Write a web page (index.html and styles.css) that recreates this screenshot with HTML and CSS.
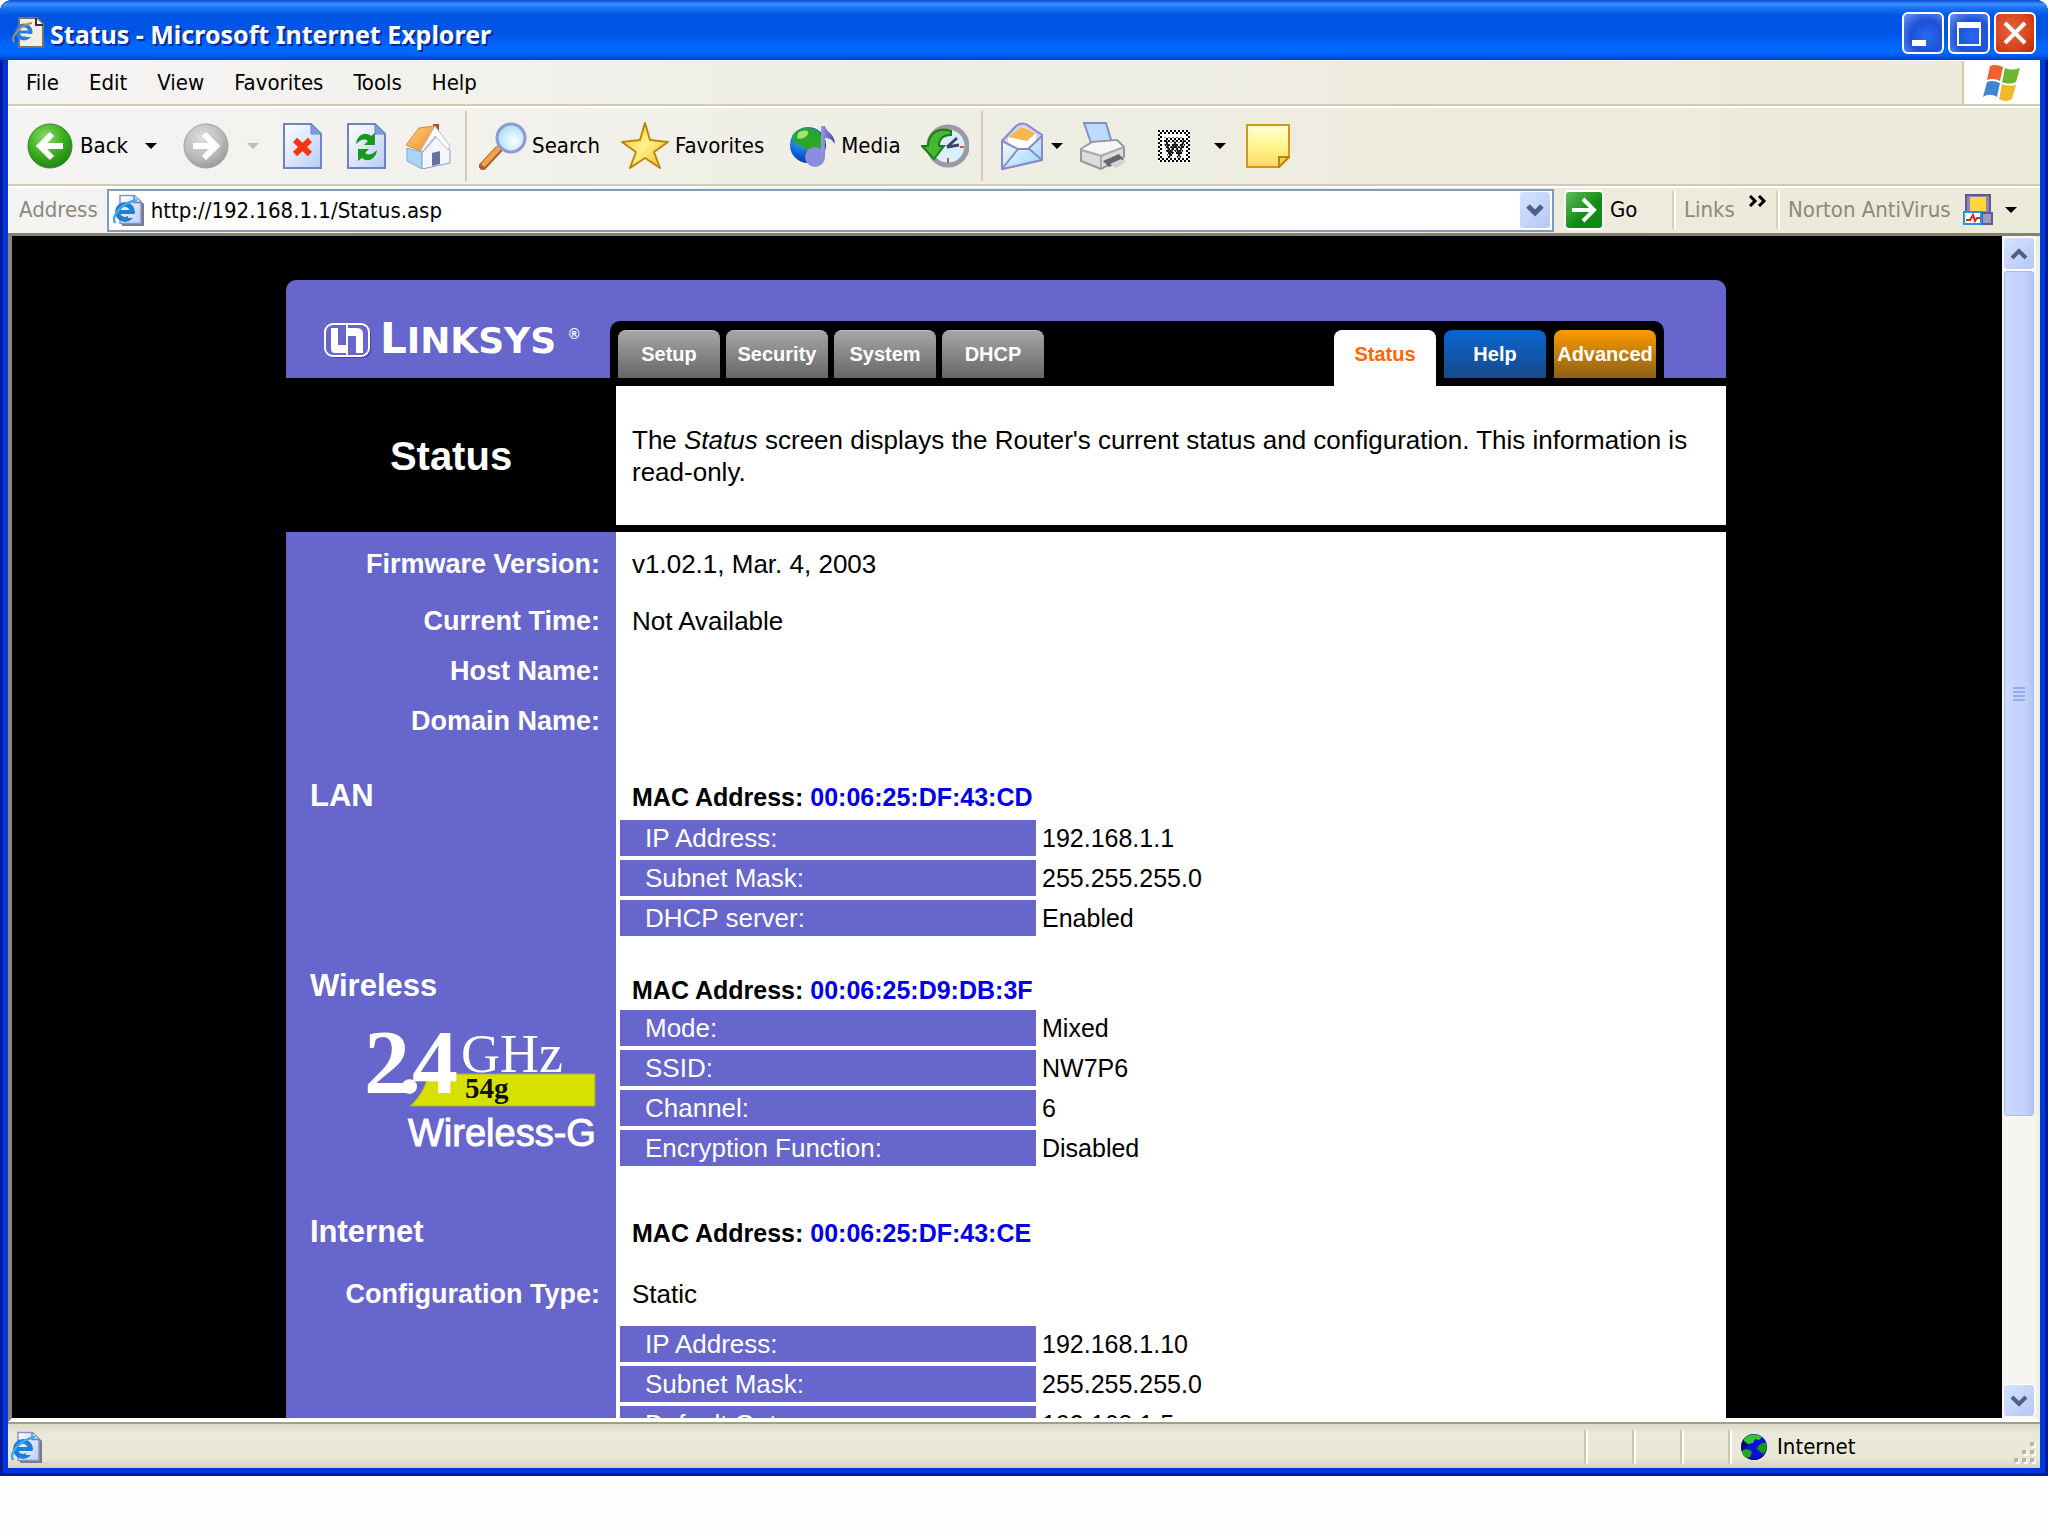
FILE: index.html
```html
<!DOCTYPE html>
<html lang="en">
<head>
<meta charset="utf-8">
<title>Status - Microsoft Internet Explorer</title>
<link rel="stylesheet" href="styles.css">
</head>
<body>
<svg class="defs" width="0" height="0" aria-hidden="true">
  <defs>
    <radialGradient id="gBack" cx=".4" cy=".3" r=".8"><stop offset="0" stop-color="#8ddc6a"/><stop offset=".5" stop-color="#3fb021"/><stop offset="1" stop-color="#187a10"/></radialGradient>
    <radialGradient id="gFwd" cx=".4" cy=".3" r=".8"><stop offset="0" stop-color="#dedede"/><stop offset=".6" stop-color="#b9b9b9"/><stop offset="1" stop-color="#8f8f8f"/></radialGradient>
    <linearGradient id="gPage" x1="0" y1="0" x2="1" y2="1"><stop offset="0" stop-color="#ffffff"/><stop offset="1" stop-color="#b9cdf6"/></linearGradient>
    <linearGradient id="gRoof" x1="0" y1="0" x2="1" y2="1"><stop offset="0" stop-color="#ffd28a"/><stop offset="1" stop-color="#f08a1c"/></linearGradient>
    <linearGradient id="gStar" x1="0" y1="0" x2="1" y2="1"><stop offset="0" stop-color="#ffc81c"/><stop offset=".5" stop-color="#fff08a"/><stop offset="1" stop-color="#f7b512"/></linearGradient>
    <radialGradient id="gGlobe" cx=".35" cy=".3" r=".8"><stop offset="0" stop-color="#58b4ff"/><stop offset=".6" stop-color="#0a5fd6"/><stop offset="1" stop-color="#062e86"/></radialGradient>
    <radialGradient id="gLens" cx=".6" cy=".6" r=".7"><stop offset="0" stop-color="#ffffff"/><stop offset="1" stop-color="#9ad9fb"/></radialGradient>
    <linearGradient id="gNote" x1="0" y1="0" x2="0" y2="1"><stop offset="0" stop-color="#fffdd8"/><stop offset=".5" stop-color="#fff78c"/><stop offset="1" stop-color="#ffd669"/></linearGradient>
    <linearGradient id="gMail" x1="0" y1="0" x2="1" y2="1"><stop offset="0" stop-color="#ffffff"/><stop offset="1" stop-color="#93d3fb"/></linearGradient>
    <linearGradient id="gNote4" x1="0" y1="0" x2="1" y2="0"><stop offset="0" stop-color="#9a9ae6"/><stop offset="1" stop-color="#4a4aa8"/></linearGradient>
    <pattern id="pDots" width="4" height="4" patternUnits="userSpaceOnUse"><rect width="4" height="4" fill="#fff"/><rect width="2" height="2" fill="#000"/><rect x="2" y="2" width="2" height="2" fill="#000"/></pattern>
    <symbol id="iePage" viewBox="0 0 32 32">
      <path d="M9 4h16l6 6v22H9z" fill="#7a7a8a"/>
      <path d="M7 1.500h14.500l6.500 6.500v21.500H7z" fill="url(#gPage)" stroke="#8793cc" stroke-width="1.500"/>
      <path d="M21 1.500v7h7" fill="#cfe2fb" stroke="#6a7fc8" stroke-width="1.500"/>
      <circle cx="12" cy="18" r="7.500" fill="none" stroke="#1f7fd4" stroke-width="5"/>
      <path d="M5 18h15" stroke="#1f7fd4" stroke-width="4"/>
      <path d="M15 20h8v4h-8z" fill="#d3e0fa"/>
      <path d="M2 29C-2 22 8 9 24 6" fill="none" stroke="#4aa6ea" stroke-width="2.500"/>
    </symbol>
  </defs>
</svg>

<div class="window">
  <header class="titlebar">
    <svg class="title-icon" viewBox="0 0 32 32" width="32" height="32"><path d="M7 1h18l6 6v23H7z" fill="#f1efe4" stroke="#77746a" stroke-width="2"/><path d="M24 1v7h7" fill="#fff" stroke="#333" stroke-width="2"/><circle cx="12" cy="15" r="6.500" fill="none" stroke="#2a7de0" stroke-width="4"/><path d="M6 15h13" stroke="#2a7de0" stroke-width="3"/><path d="M14 17h7v3h-7z" fill="#f1efe4"/><path d="M2 25C-1 20 7 8 20 6" fill="none" stroke="#a8915a" stroke-width="2"/></svg>
    <h1 class="title">Status - Microsoft Internet Explorer</h1>
    <div class="win-buttons">
      <button class="win-btn" aria-label="Minimize"><svg viewBox="0 0 38 38" width="38" height="38"><path d="M8 26h14v6H8z" fill="#fff"/></svg></button>
      <button class="win-btn" aria-label="Maximize"><svg viewBox="0 0 38 38" width="38" height="38"><path d="M8 9h22v22H8z" fill="none" stroke="#fff" stroke-width="2"/><path d="M7 8h24v6H7z" fill="#fff"/></svg></button>
      <button class="win-btn win-close" aria-label="Close"><svg viewBox="0 0 38 38" width="38" height="38"><path d="M9 9l20 20M29 9L9 29" stroke="#fff" stroke-width="4"/></svg></button>
    </div>
  </header>

  <div class="chrome">
    <nav class="menubar">
      <button>File</button><button>Edit</button><button>View</button><button>Favorites</button><button>Tools</button><button>Help</button>
      <span class="throbber"><svg viewBox="0 0 40 38" width="40" height="38"><path d="M8 2c5-2 8-1 13 1l-3 14c-4-2-8-3-13-1z" fill="#f0622d"/><path d="M23 4c5 2 9 2 15 0l-4 14c-5 2-9 2-14 0z" fill="#6cb52d"/><path d="M5 18c5-2 8-1 13 1l-3 14c-5-3-9-3-14 0z" fill="#3f85d0"/><path d="M20 20c5 2 9 2 14 1l-4 14c-5 3-9 2-13 0z" fill="#f2b92a"/></svg></span>
    </nav>

    <div class="toolbar">
      <button class="tool back"><svg viewBox="0 0 46 46" width="46" height="46"><circle cx="23" cy="23" r="22" fill="url(#gBack)" stroke="#2c8a22"/><path d="M36 23H13M25 11L13 23l12 12" fill="none" stroke="#fff" stroke-width="6"/></svg>Back<i class="caret"></i></button>
      <button class="tool forward" aria-label="Forward"><svg viewBox="0 0 46 46" width="46" height="46"><circle cx="23" cy="23" r="22" fill="url(#gFwd)" stroke="#a0a0a0"/><path d="M10 23h23M21 11l12 12-12 12" fill="none" stroke="#fff" stroke-width="6"/></svg><i class="caret dim"></i></button>
      <button class="tool stop" aria-label="Stop"><svg viewBox="0 0 40 46" width="40" height="46"><path d="M1 1h27l10 10v34H1z" fill="url(#gPage)" stroke="#6b85c4" stroke-width="2"/><path d="M28 1v10h10z" fill="#7b9fd8" stroke="#6b85c4"/><path d="M12 17l15 14M27 17L12 31" stroke="#f6340e" stroke-width="6"/></svg></button>
      <button class="tool refresh" aria-label="Refresh"><svg viewBox="0 0 40 46" width="40" height="46"><path d="M1 1h27l10 10v34H1z" fill="url(#gPage)" stroke="#6b85c4" stroke-width="2"/><path d="M28 1v10h10z" fill="#7b9fd8" stroke="#6b85c4"/><path d="M9 21C10 12 18 8 24 13l4-3v12H17l4-4c-4-3-8-1-12 3z" fill="#169a1e"/><path d="M30 27c-1 9-9 13-15 8l-4 3V26h11l-4 4c4 3 8 1 12-3z" fill="#169a1e"/></svg></button>
      <button class="tool home" aria-label="Home"><svg viewBox="0 0 46 46" width="46" height="46"><path d="M28 1h6v13h-6z" fill="#c8401f"/><path d="M2 25l15 4v17L2 38z" fill="#a9d4f5" stroke="#88a5d5"/><path d="M17 30L31 14l14 13v13L17 46z" fill="#f3f6fd" stroke="#8d9bd0"/><path d="M27 30l8-2v13l-8 2z" fill="#66709a"/><path d="M14 5l16-2-14 25L1 22z" fill="url(#gRoof)" stroke="#d98a34"/><path d="M30 3l15 20-2 4-13-14-13 16-1-2z" fill="#fff" stroke="#b8b8d0"/></svg></button>
      <span class="divider"></span>
      <button class="tool search"><svg viewBox="0 0 48 48" width="48" height="48"><path d="M4 44l15-16" stroke="#a3603c" stroke-width="8" stroke-linecap="round"/><path d="M5 42l14-15" stroke="#f5a244" stroke-width="5" stroke-linecap="round"/><circle cx="32" cy="16" r="14" fill="url(#gLens)" stroke="#8f98d6" stroke-width="3"/></svg>Search</button>
      <button class="tool favorites"><svg viewBox="0 0 50 48" width="50" height="48"><path d="M25 1l5 17 18 2-14 10 6 16-15-10-15 10 6-16L2 20l18-2z" fill="url(#gStar)" stroke="#c08411" stroke-width="2" stroke-linejoin="round"/></svg>Favorites</button>
      <button class="tool media"><svg viewBox="0 0 48 46" width="48" height="46"><circle cx="20" cy="22" r="18" fill="url(#gGlobe)"/><path d="M4 13C9 4 24 2 32 10l3 10-3 8-6-3-5 7-5-8-8-3z" fill="#2aa62a"/><path d="M10 10c5-4 12-3 10 1s-8 6-11 4z" fill="#a5e46e"/><circle cx="27" cy="34" r="10" fill="#8d8de0"/><path d="M33 34V3h4c1 6 10 8 10 18-3-4-5-6-10-6v19z" fill="url(#gNote4)"/></svg>Media</button>
      <button class="tool history" aria-label="History"><svg viewBox="0 0 48 46" width="48" height="46"><circle cx="27" cy="23" r="19" fill="#d8f0fd" stroke="#9a9aa4" stroke-width="5"/><path d="M26 24l10-9M26 24l12-2" stroke="#3b4470" stroke-width="3"/><path d="M39 24h4M27 35v5" stroke="#e0542c" stroke-width="2"/><path d="M30 8C17 3 7 11 7 23H1l12 13 10-13h-5c0-7 4-11 12-11z" fill="#46b732" stroke="#1d7c17" stroke-width="2"/></svg></button>
      <span class="divider second"></span>
      <button class="tool mail" aria-label="Mail"><svg viewBox="0 0 42 48" width="42" height="48"><path d="M1 19L15 4q7-5 13 0l13 9v25L1 47z" fill="#c9d4f6" stroke="#8889c9" stroke-width="2"/><path d="M7 15l15-10 13 6v17L8 30z" fill="#fff"/><path d="M7 15l14-10 14 6-9 8z" fill="#f6b750"/><path d="M1 19l16 8h10l14-13v24L1 47z" fill="url(#gMail)" stroke="#8889c9" stroke-width="2"/><path d="M1 47l16-20M41 38L27 26" stroke="#8889c9" stroke-width="2"/></svg><i class="caret"></i></button>
      <button class="tool print" aria-label="Print"><svg viewBox="0 0 48 48" width="48" height="48"><path d="M5 1h22l6 20H12z" fill="#bcdcfb" stroke="#8490c4" stroke-width="2"/><path d="M2 27l11-7 25-2 7 7v10L22 47 2 39z" fill="#dcdcdc" stroke="#96969e" stroke-width="2"/><path d="M3 27l19 5 22-7-7-6-23 2z" fill="#f6f6f6"/><path d="M2 28l20 6 23-9M22 34v12" fill="none" stroke="#aaaaae" stroke-width="2"/><path d="M24 39l16-7 5 6-15 7z" fill="#66666e"/><path d="M31 42l11-5 5 3-10 6z" fill="#d2d2d6"/></svg></button>
      <button class="tool word" aria-label="Edit with Word"><svg viewBox="0 0 32 32" width="32" height="32"><rect width="32" height="32" fill="url(#pDots)"/><rect x="4" y="4" width="24" height="24" fill="#fff"/><path d="M6 10h20M8 10l4 15 5-12 4 12 5-15" fill="none" stroke="url(#pDots)" stroke-width="5"/><path d="M8 10l4 15 5-12 4 12 5-15" fill="none" stroke="#222" stroke-width="2"/></svg><i class="caret"></i></button>
      <button class="tool note" aria-label="Discuss"><svg viewBox="0 0 44 44" width="44" height="44"><path d="M1 1h42v32L33 43H1z" fill="url(#gNote)" stroke="#cf9a10" stroke-width="2"/><path d="M33 43V33h10z" fill="#f5cf4a" stroke="#b9860c" stroke-width="2"/></svg></button>
    </div>

    <form class="addressbar">
      <label for="url">Address</label>
      <div class="combo">
        <svg width="32" height="32"><use href="#iePage"/></svg>
        <input id="url" type="text" value="http://192.168.1.1/Status.asp">
        <button class="arrow-btn" type="button" aria-label="Show addresses"><svg viewBox="0 0 18 14" width="18" height="14"><path d="M2 3l7 7 7-7" fill="none" stroke="#4d6185" stroke-width="5"/></svg></button>
      </div>
      <button class="go" type="button"><span class="go-icon"><svg viewBox="0 0 36 36" width="36" height="36"><path d="M6 18h21M17 7l11 11-11 11" fill="none" stroke="#fff" stroke-width="4"/></svg></span>Go</button>
      <div class="band links">Links<svg viewBox="0 0 18 12" width="18" height="12"><path d="M1 1l5 5-5 5M10 1l5 5-5 5" fill="none" stroke="#000" stroke-width="3"/></svg></div>
      <div class="band norton">Norton AntiVirus<svg viewBox="0 0 30 34" width="30" height="34"><path d="M3 2h24v22H3z" fill="#8d86b8" stroke="#5e5a92" stroke-width="2"/><path d="M7 4h16v14H7z" fill="#ffd93a"/><path d="M19 20h10v11H19z" fill="#9d9cc0" stroke="#5e5a92" stroke-width="2"/><path d="M1 19h17v12H1z" fill="#fff" stroke="#2391e4" stroke-width="2"/><path d="M3 27h4l3-5 2 6 2-3h3" fill="none" stroke="#e8240c" stroke-width="2"/></svg><i class="caret"></i></div>
    </form>
  </div>

  <div class="viewport">
    <div class="page">
      <main class="router">
        <header class="router-head">
          <svg class="linksys" viewBox="0 0 260 44" width="260" height="44" role="img" aria-label="Linksys">
            <rect x="3" y="7" width="44" height="32" rx="8" fill="#45459c"/>
            <rect x="1" y="5" width="44" height="32" rx="8" fill="#6666cc" stroke="#fff" stroke-width="2"/>
            <path d="M7 9h7v17h8v8H11q-4 0-4-4z" fill="#fff"/><path d="M24 9h9q6 0 6 6v19h-7V17h-8z" fill="#fff"/><path d="M23 6v30" stroke="#fff" stroke-width="2"/>
            <text class="logo-text" x="56" y="34"><tspan class="logo-l">L</tspan>INKSYS</text>
            <text class="logo-reg" x="245" y="20">®</text>
          </svg>
          <nav class="tabs">
            <a class="tab" href="#setup">Setup</a><a class="tab" href="#security">Security</a><a class="tab" href="#system">System</a><a class="tab" href="#dhcp">DHCP</a>
            <span class="tabs-right"><a class="tab current" href="#status">Status</a><a class="tab help" href="#help">Help</a><a class="tab advanced" href="#advanced">Advanced</a></span>
          </nav>
        </header>

        <section class="intro">
          <h2>Status</h2>
          <p>The <em>Status</em> screen displays the Router's current status and configuration. This information is read-only.</p>
        </section>

        <div class="body">
          <dl class="fields">
            <dt>Firmware Version:</dt><dd>v1.02.1, Mar. 4, 2003</dd>
            <dt>Current Time:</dt><dd>Not Available</dd>
            <dt>Host Name:</dt><dd></dd>
            <dt>Domain Name:</dt><dd></dd>
          </dl>

          <section class="block">
            <h3>LAN</h3>
            <div class="detail">
              <p class="mac">MAC Address: <b>00:06:25:DF:43:CD</b></p>
              <table>
                <tr><th scope="row">IP Address:</th><td>192.168.1.1</td></tr>
                <tr><th scope="row">Subnet Mask:</th><td>255.255.255.0</td></tr>
                <tr><th scope="row">DHCP server:</th><td>Enabled</td></tr>
              </table>
            </div>
          </section>

          <section class="block wireless">
            <div>
              <h3>Wireless</h3>
              <svg class="badge" viewBox="0 0 236 130" width="236" height="130" role="img" aria-label="2.4 GHz 54g Wireless-G">
                <path d="M64 46h167v32H46c8-7 16-18 18-32z" fill="#d8e000" stroke="#a5a55a"/>
                <g class="big"><text x="0" y="65">2</text><text x="34" y="65">.</text><text x="48" y="65">4</text></g>
                <text class="ghz" x="97" y="44">GHz</text>
                <text class="speed" x="101" y="70">54g</text>
                <text class="wg" x="44" y="118">Wireless-G</text>
              </svg>
            </div>
            <div class="detail">
              <p class="mac">MAC Address: <b>00:06:25:D9:DB:3F</b></p>
              <table>
                <tr><th scope="row">Mode:</th><td>Mixed</td></tr>
                <tr><th scope="row">SSID:</th><td>NW7P6</td></tr>
                <tr><th scope="row">Channel:</th><td>6</td></tr>
                <tr><th scope="row">Encryption Function:</th><td>Disabled</td></tr>
              </table>
            </div>
          </section>

          <section class="block internet">
            <h3>Internet</h3>
            <div class="detail">
              <p class="mac">MAC Address: <b>00:06:25:DF:43:CE</b></p>
            </div>
          </section>
          <dl class="fields">
            <dt>Configuration Type:</dt><dd>Static</dd>
          </dl>
          <div class="block rest">
            <div class="detail">
              <table>
                <tr><th scope="row">IP Address:</th><td>192.168.1.10</td></tr>
                <tr><th scope="row">Subnet Mask:</th><td>255.255.255.0</td></tr>
                <tr><th scope="row">Default Gateway:</th><td>192.168.1.5</td></tr>
              </table>
            </div>
          </div>
        </div>
      </main>
    </div>
    <div class="scrollbar">
      <button class="arrow-btn" aria-label="Scroll up"><svg viewBox="0 0 18 14" width="18" height="14"><path d="M2 11l7-7 7 7" fill="none" stroke="#4d6185" stroke-width="4"/></svg></button>
      <div class="track"><div class="thumb"><i></i><i></i><i></i><i></i></div></div>
      <button class="arrow-btn" aria-label="Scroll down"><svg viewBox="0 0 18 14" width="18" height="14"><path d="M2 3l7 7 7-7" fill="none" stroke="#4d6185" stroke-width="4"/></svg></button>
    </div>
  </div>

  <footer class="statusbar">
    <svg width="32" height="32"><use href="#iePage"/></svg>
    <span class="cell first"></span><span class="cell"></span><span class="cell"></span>
    <span class="cell zone"><svg viewBox="0 0 28 28" width="28" height="28"><circle cx="14" cy="14" r="13" fill="#0a12d8"/><path d="M14 1a13 13 0 1 0 12 18l-3 3c-6 6-16 4-20-3z" fill="#04063c" opacity=".7"/><path d="M4 6c4-5 12-6 18-2l-3 3-4-1-2 4-5 1-4-3z" fill="#35c432"/><path d="M17 16c1-4 5-7 9-6 1 5 0 9-3 11z" fill="#159a14"/><path d="M2 18c3-3 8-2 10 1l-2 5-4 1c-3-2-4-4-4-7z" fill="#21a81e"/></svg>Internet</span>
    <svg class="grip" viewBox="0 0 24 24" width="24" height="24"><path d="M18 2h4v4h-4zM10 10h4v4h-4zM18 10h4v4h-4zM2 18h4v4H2zM10 18h4v4h-4zM18 18h4v4h-4z" fill="#fff"/><path d="M16 0h4v4h-4zM8 8h4v4H8zM16 8h4v4h-4zM0 16h4v4H0zM8 16h4v4H8zM16 16h4v4h-4z" fill="#b8b6a2"/></svg>
  </footer>
</div>
</body>
</html>
```
FILE: styles.css
```css
* { box-sizing: border-box; }
body { margin: 0; background: #fefefe; font: 22px/28px "DejaVu Sans Condensed", "DejaVu Sans", sans-serif; color: #000; }
button { margin: 0; padding: 0; border: 0; background: none; color: inherit; font: inherit; }
svg { display: block; flex: none; }
.defs { position: absolute; }
h1, h2, h3, p, dl, dd { margin: 0; }

/* window frame */
.window { display: flex; flex-direction: column; height: calc(100vh - 60px); padding: 0 8px 8px; border-radius: 12px 12px 0 0; background: #0038dc; box-shadow: inset 3px -3px #001a9c, inset -3px 0 #001a9c; }
.titlebar { display: flex; align-items: center; flex: none; height: 60px; margin: 0 -8px; padding: 5px 12px 0; border-radius: 12px 12px 0 0; background: linear-gradient(#0a48d0 0, #3a93ff 4px, #1a72f4 8px, #0054e3 16px, #0055e8 34px, #0068ff 46px, #0066ff 54px, #0040c0 60px); }
.title { margin: 2px 0 0 6px; font: bold 25px/32px "Noto Sans", sans-serif; color: #fff; text-shadow: 2px 2px #0a2a90; }
.win-buttons { display: flex; gap: 4px; margin-left: auto; }
.win-btn { width: 42px; height: 42px; border: 2px solid #fff; border-radius: 6px; background: radial-gradient(circle at 60% 60%, #2a6af0, #1c50d8 50%, #6f94f0); }
.win-close { background: radial-gradient(circle at 40% 40%, #e8603a, #d8441c 60%, #b02a08); }

/* browser bars */
.chrome { flex: none; background: linear-gradient(90deg, #f5f4f4, #efeee4 45%, #ebe9d8); }
.menubar { display: flex; align-items: center; gap: 30px; height: 46px; padding-left: 18px; border-top: 1px solid #fff; border-bottom: 2px solid #cfcbb4; }
.throbber { display: grid; place-items: center; align-self: stretch; width: 78px; margin-left: auto; border-left: 2px solid #cfcbb4; background: #fff; }
.toolbar { display: flex; align-items: center; height: 80px; padding-left: 19px; border-top: 2px solid #fff; border-bottom: 2px solid #cfcbb4; }
.tool { display: flex; align-items: center; gap: 8px; }
.caret { border: 6px solid transparent; border-top-color: #000; border-bottom: 0; }
.caret.dim { border-top-color: #bdbdb5; }
.back { gap: 7px; }
.back .caret { margin-left: 10px; }
.forward { margin-left: 26px; gap: 18px; }
.stop, .refresh { margin-left: 24px; }
.home { margin-left: 18px; }
.divider { width: 2px; height: 70px; margin-left: 14px; background: #cfcbb4; }
.divider.second { margin-left: 12px; }
.search, .favorites, .media { gap: 5px; }
.search { margin-left: 12px; }
.favorites { margin-left: 20px; }
.media { margin-left: 24px; }
.history { margin-left: 20px; }
.mail { margin-left: 18px; }
.print { margin-left: 16px; }
.word { margin-left: 31px; gap: 24px; }
.note { margin-left: 20px; }

.addressbar { display: flex; align-items: center; height: 50px; padding: 3px 0 4px 11px; border-bottom: 3px solid #85826f; border-top: 2px solid #fff; color: #8b897e; }
.combo { display: flex; align-items: center; flex: 1; height: 43px; margin-left: 9px; padding: 0 2px 0 4px; border: 2px solid #7f9db9; background: #fff; }
.combo input { flex: 1; min-width: 0; margin-left: 6px; padding: 2px 0 0; border: 0; outline: 0; font: inherit; color: #000; background: none; }
.arrow-btn { display: grid; place-items: center; flex: none; width: 30px; height: 36px; border-radius: 3px; background: linear-gradient(135deg, #d6e2ff, #b4c8f6); }
.go { display: flex; align-items: center; gap: 8px; width: 108px; margin-left: 12px; color: #000; }
.go-icon { border-radius: 3px; background: linear-gradient(135deg, #5dbb56, #0f8a14 60%); box-shadow: 0 0 0 2px #fff; }
.band { display: flex; align-items: center; align-self: stretch; padding-left: 8px; border-left: 2px solid #fff; box-shadow: -2px 0 #d3d0bc; }
.links { width: 104px; gap: 14px; }
.links svg { margin-bottom: 18px; }
.norton { width: 262px; gap: 12px; }

/* page area */
.viewport { display: flex; flex: 1; min-height: 0; border-left: 4px solid #8b8878; border-right: 4px solid #f1efe2; border-bottom: 4px solid #fff; background: #000; }
.page { flex: 1; overflow: hidden; padding: 44px 34px 0 32px; }
.scrollbar { display: flex; flex-direction: column; align-items: center; gap: 2px; width: 34px; padding: 2px 0; background: #f6f5f2; }
.scrollbar .arrow-btn { height: 31px; box-shadow: 0 0 0 1px #fff; }
.track { flex: 1; }
.thumb { display: flex; flex-direction: column; align-items: center; justify-content: center; gap: 2px; width: 30px; height: 76%; border: 1px solid #a9bdf0; border-radius: 3px; background: linear-gradient(90deg, #ccd9ff, #c3d2fd 70%, #b2c5f6); }
.thumb i { width: 12px; height: 2px; background: #93aeee; }

.router { max-width: 1440px; margin: 0 auto; font: 25px/32px "Liberation Sans", Arial, sans-serif; }
.router-head { display: flex; height: 98px; border-radius: 10px 10px 0 0; background: #6666cc; }
.linksys { margin: 39px 26px 0 38px; }
.logo-text { font: bold 36px "DejaVu Sans", sans-serif; fill: #fff; }
.logo-l { font-size: 42px; }
.logo-reg { font: bold 14px "Liberation Sans", sans-serif; fill: #fff; }
.tabs { display: flex; flex: 1; align-items: flex-start; gap: 6px; margin: 41px 62px 0 0; padding: 9px 8px 0; border-radius: 10px 10px 0 0; background: #000; }
.tabs-right { display: flex; gap: 8px; margin-left: auto; }
.tab { width: 102px; height: 48px; border-radius: 8px 8px 0 0; border-top: 1px solid #bbb; background: linear-gradient(#a6a6a6, #666); color: #fff; font: bold 20px/47px "Liberation Sans", Arial, sans-serif; text-align: center; text-decoration: none; }
.tab.current { height: 56px; border-color: #fff; background: #fff; color: #ff6600; }
.tab.help { border-color: #0a5cc0; background: linear-gradient(#0a66d0, #17498a); }
.tab.advanced { border-color: #ffa010; background: linear-gradient(#fa9a00, #8c6018); }

.intro { display: grid; grid-template-columns: 330px 1fr; align-items: stretch; min-height: 139px; margin-top: 8px; }
.intro h2 { display: grid; place-items: center; font-size: 40px; line-height: 44px; color: #fff; }
.intro p { padding: 38px 24px 0 16px; background: #fff; font-size: 26px; }

.body { margin-top: 7px; background: linear-gradient(90deg, #6666cc 330px, #fff 330px); }
.fields { display: grid; grid-template-columns: 330px 1fr; grid-auto-rows: 50px; grid-template-rows: 64px; align-items: center; font-size: 26px; }
.fields dt { padding-right: 16px; font-size: 27px; font-weight: bold; text-align: right; color: #fff; }
.fields dd { padding-left: 16px; }
.block { display: grid; grid-template-columns: 330px 1fr; }
.block h3 { padding: 32px 0 0 24px; font-size: 31px; line-height: 36px; color: #fff; }
.block .detail { grid-column: 2; }
.wireless { padding-bottom: 16px; }
.internet { padding-bottom: 6px; }
.badge { margin: 24px 16px 0 auto; }
.big { font: bold 92px "Liberation Serif", serif; fill: #fff; }
.ghz { font: 54px "Liberation Serif", serif; fill: #fff; }
.speed { font: bold 29px "Liberation Serif", serif; fill: #111; }
.wg { font: 38px "Liberation Sans", sans-serif; fill: #fff; stroke: #fff; stroke-width: 1px; }
.mac { padding: 35px 0 7px 16px; font-weight: bold; }
.wireless .mac { padding: 38px 0 4px 16px; }
.mac b { color: #0000e8; }
table { width: 100%; border-collapse: collapse; }
th { width: 422px; height: 36px; padding: 0 0 4px 4px; background: linear-gradient(#6666cc 0 0) 4px 0 / 416px 36px no-repeat; font-size: 26px; font-weight: normal; line-height: 36px; text-align: left; color: #fff; text-indent: 25px; }
td { padding: 0 0 4px 4px; line-height: 36px; }
.block table { margin-bottom: -4px; }

/* status bar */
.statusbar { display: flex; align-items: center; flex: none; height: 46px; padding: 2px 0 0 3px; border-top: 2px solid #a19e8a; background: linear-gradient(#dddac6, #ebe9da 10px, #e9e7d6 34px, #d4d1bc); }
.cell { width: 48px; height: 34px; border-left: 2px solid #fff; box-shadow: -2px 0 #c9c6b0; }
.cell.first { margin-left: auto; }
.cell.zone { display: flex; align-items: center; gap: 9px; width: 284px; padding-left: 8px; }
.grip { align-self: flex-end; margin: 0 2px 2px 0; }
```
